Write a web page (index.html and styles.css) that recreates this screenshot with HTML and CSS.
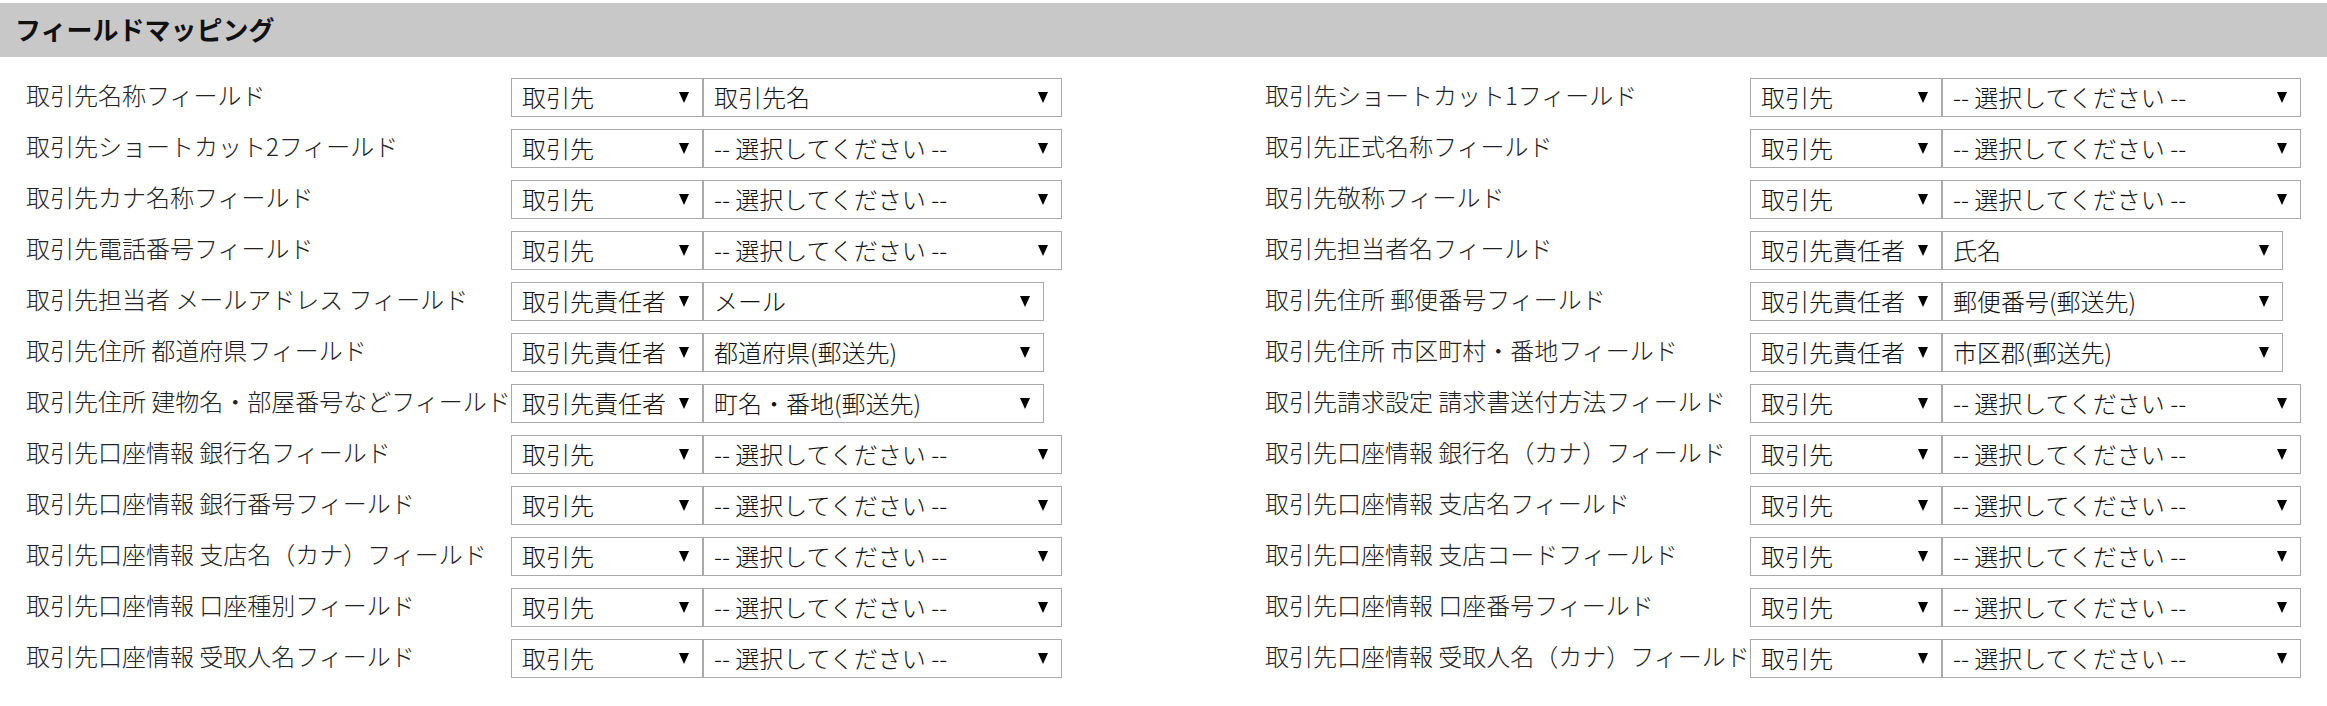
FILE: index.html
```html
<!DOCTYPE html>
<html lang="ja">
<head>
<meta charset="utf-8">
<title>フィールドマッピング</title>
<link rel="stylesheet" href="styles.css">
</head>
<body>
<div class="header"><h1 class="title">フィールドマッピング</h1></div>
<div class="columns">
  <div class="col">
    <div class="row"><div class="label">取引先名称フィールド</div><div class="sel obj"><span>取引先</span><i class="arrow"></i></div><div class="sel field"><span>取引先名</span><i class="arrow"></i></div></div>
    <div class="row"><div class="label">取引先ショートカット2フィールド</div><div class="sel obj"><span>取引先</span><i class="arrow"></i></div><div class="sel field"><span>-- 選択してください --</span><i class="arrow"></i></div></div>
    <div class="row"><div class="label">取引先カナ名称フィールド</div><div class="sel obj"><span>取引先</span><i class="arrow"></i></div><div class="sel field"><span>-- 選択してください --</span><i class="arrow"></i></div></div>
    <div class="row"><div class="label">取引先電話番号フィールド</div><div class="sel obj"><span>取引先</span><i class="arrow"></i></div><div class="sel field"><span>-- 選択してください --</span><i class="arrow"></i></div></div>
    <div class="row"><div class="label">取引先担当者 メールアドレス フィールド</div><div class="sel obj"><span>取引先責任者</span><i class="arrow"></i></div><div class="sel field narrow"><span>メール</span><i class="arrow"></i></div></div>
    <div class="row"><div class="label">取引先住所 都道府県フィールド</div><div class="sel obj"><span>取引先責任者</span><i class="arrow"></i></div><div class="sel field narrow"><span>都道府県(郵送先)</span><i class="arrow"></i></div></div>
    <div class="row"><div class="label">取引先住所 建物名・部屋番号などフィールド</div><div class="sel obj"><span>取引先責任者</span><i class="arrow"></i></div><div class="sel field narrow"><span>町名・番地(郵送先)</span><i class="arrow"></i></div></div>
    <div class="row"><div class="label">取引先口座情報 銀行名フィールド</div><div class="sel obj"><span>取引先</span><i class="arrow"></i></div><div class="sel field"><span>-- 選択してください --</span><i class="arrow"></i></div></div>
    <div class="row"><div class="label">取引先口座情報 銀行番号フィールド</div><div class="sel obj"><span>取引先</span><i class="arrow"></i></div><div class="sel field"><span>-- 選択してください --</span><i class="arrow"></i></div></div>
    <div class="row"><div class="label">取引先口座情報 支店名（カナ）フィールド</div><div class="sel obj"><span>取引先</span><i class="arrow"></i></div><div class="sel field"><span>-- 選択してください --</span><i class="arrow"></i></div></div>
    <div class="row"><div class="label">取引先口座情報 口座種別フィールド</div><div class="sel obj"><span>取引先</span><i class="arrow"></i></div><div class="sel field"><span>-- 選択してください --</span><i class="arrow"></i></div></div>
    <div class="row"><div class="label">取引先口座情報 受取人名フィールド</div><div class="sel obj"><span>取引先</span><i class="arrow"></i></div><div class="sel field"><span>-- 選択してください --</span><i class="arrow"></i></div></div>
  </div>
  <div class="col">
    <div class="row"><div class="label">取引先ショートカット1フィールド</div><div class="sel obj"><span>取引先</span><i class="arrow"></i></div><div class="sel field"><span>-- 選択してください --</span><i class="arrow"></i></div></div>
    <div class="row"><div class="label">取引先正式名称フィールド</div><div class="sel obj"><span>取引先</span><i class="arrow"></i></div><div class="sel field"><span>-- 選択してください --</span><i class="arrow"></i></div></div>
    <div class="row"><div class="label">取引先敬称フィールド</div><div class="sel obj"><span>取引先</span><i class="arrow"></i></div><div class="sel field"><span>-- 選択してください --</span><i class="arrow"></i></div></div>
    <div class="row"><div class="label">取引先担当者名フィールド</div><div class="sel obj"><span>取引先責任者</span><i class="arrow"></i></div><div class="sel field narrow"><span>氏名</span><i class="arrow"></i></div></div>
    <div class="row"><div class="label">取引先住所 郵便番号フィールド</div><div class="sel obj"><span>取引先責任者</span><i class="arrow"></i></div><div class="sel field narrow"><span>郵便番号(郵送先)</span><i class="arrow"></i></div></div>
    <div class="row"><div class="label">取引先住所 市区町村・番地フィールド</div><div class="sel obj"><span>取引先責任者</span><i class="arrow"></i></div><div class="sel field narrow"><span>市区郡(郵送先)</span><i class="arrow"></i></div></div>
    <div class="row"><div class="label">取引先請求設定 請求書送付方法フィールド</div><div class="sel obj"><span>取引先</span><i class="arrow"></i></div><div class="sel field"><span>-- 選択してください --</span><i class="arrow"></i></div></div>
    <div class="row"><div class="label">取引先口座情報 銀行名（カナ）フィールド</div><div class="sel obj"><span>取引先</span><i class="arrow"></i></div><div class="sel field"><span>-- 選択してください --</span><i class="arrow"></i></div></div>
    <div class="row"><div class="label">取引先口座情報 支店名フィールド</div><div class="sel obj"><span>取引先</span><i class="arrow"></i></div><div class="sel field"><span>-- 選択してください --</span><i class="arrow"></i></div></div>
    <div class="row"><div class="label">取引先口座情報 支店コードフィールド</div><div class="sel obj"><span>取引先</span><i class="arrow"></i></div><div class="sel field"><span>-- 選択してください --</span><i class="arrow"></i></div></div>
    <div class="row"><div class="label">取引先口座情報 口座番号フィールド</div><div class="sel obj"><span>取引先</span><i class="arrow"></i></div><div class="sel field"><span>-- 選択してください --</span><i class="arrow"></i></div></div>
    <div class="row"><div class="label">取引先口座情報 受取人名（カナ）フィールド</div><div class="sel obj"><span>取引先</span><i class="arrow"></i></div><div class="sel field"><span>-- 選択してください --</span><i class="arrow"></i></div></div>
  </div>
</div>
</body>
</html>
```

FILE: styles.css
```css
html, body {
  margin: 0;
  padding: 0;
  background: #ffffff;
}

body {
  font-family: "Noto Sans CJK JP", "Noto Sans", sans-serif;
  color: #333333;
}

.header {
  margin-top: 3px;
  height: 54px;
  background: #c8c8c8;
  display: flex;
  align-items: center;
  padding-left: 15px;
}

.title {
  margin: 0;
  font-size: 26px;
  line-height: 1;
  font-weight: 700;
  color: #111111;
  padding-bottom: 2px;
}

.columns {
  display: grid;
  grid-template-columns: 1239px auto;
  padding-left: 26px;
  margin-top: 21px;
}

.col {
  display: flex;
  flex-direction: column;
  gap: 12px;
}

.row {
  display: flex;
  align-items: center;
  height: 39px;
}

.label {
  flex: 0 0 485px;
  width: 485px;
  white-space: nowrap;
  font-size: 24px;
  font-weight: 300;
  line-height: 1;
  color: #222222;
  padding-bottom: 6px;
}

.sel {
  box-sizing: border-box;
  height: 39px;
  border: 1px solid #a9a9a9;
  background: #ffffff;
  display: flex;
  align-items: center;
  justify-content: space-between;
  padding: 0 13px 0 10px;
  font-size: 24px;
  font-weight: 300;
  line-height: 1;
  color: #111111;
  white-space: nowrap;
}

.sel span {
  padding-bottom: 2px;
}

.obj {
  width: 192px;
  padding-right: 13px;
}

.field {
  width: 359px;
}

.field.narrow {
  width: 341px;
}

.arrow {
  display: block;
  width: 0;
  height: 0;
  border-left: 5.5px solid transparent;
  border-right: 5.5px solid transparent;
  border-top: 11px solid #000000;
  flex: 0 0 auto;
}
```
